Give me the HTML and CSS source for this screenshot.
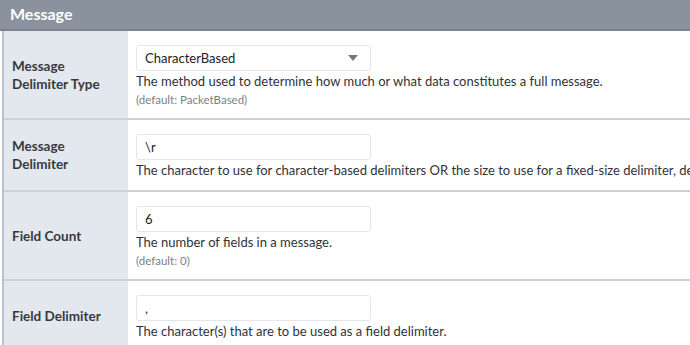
FILE: index.html
```html
<!DOCTYPE html>
<html lang="en">
<head>
    <meta charset="UTF-8" />
    <title>Message Settings</title>
    <link rel="stylesheet" href="styles.css">
</head>
<body>
    <div class="panel">
        <div class="panel-header">Message</div>
        <div class="props">
            <div class="prop-row">
                <div class="prop-label">Message Delimiter Type</div>
                <div class="prop-value">
                    <div class="field select">
                        <span>CharacterBased</span>
                        <span class="caret"></span>
                    </div>
                    <div class="desc">The method used to determine how much or what data constitutes a full message.</div>
                    <div class="default">(default: PacketBased)</div>
                </div>
            </div>
            <div class="prop-row short">
                <div class="prop-label">Message Delimiter</div>
                <div class="prop-value">
                    <div class="field">\r</div>
                    <div class="desc">The character to use for character-based delimiters OR the size to use for a fixed-size delimiter, de</div>
                </div>
            </div>
            <div class="prop-row">
                <div class="prop-label">Field Count</div>
                <div class="prop-value">
                    <div class="field">6</div>
                    <div class="desc">The number of fields in a message.</div>
                    <div class="default">(default: 0)</div>
                </div>
            </div>
            <div class="prop-row last">
                <div class="prop-label">Field Delimiter</div>
                <div class="prop-value">
                    <div class="field">,</div>
                    <div class="desc">The character(s) that are to be used as a field delimiter.</div>
                </div>
            </div>
        </div>
    </div>
</body>
</html>
```

FILE: styles.css
```css
html, body {
    margin: 0;
    overflow: hidden;
}
body {
    font-family: Lato, "Noto Sans", sans-serif;
    color: #2f3338;
    background: #fff;
    width: 690px;
    height: 345px;
}
.panel-header {
    background: #8a939d;
    color: #fff;
    font-weight: bold;
    font-size: 16px;
    line-height: 27px;
    padding-left: 10px;
    border-bottom: 2px solid #7b848e;
    box-sizing: border-box;
    height: 31px;
}
.props {
    margin-left: 2px;
    border-left: 2px solid #b9c1c9;
}
.prop-row {
    display: flex;
    border-bottom: 2px solid #cdd2d8;
    min-height: 87px;
}
.prop-row.short {
    min-height: 68px;
}
.prop-row.last {
    min-height: 70px;
    border-bottom: none;
}
.prop-label {
    width: 124px;
    flex-shrink: 0;
    background: #e3e8ee;
    box-sizing: border-box;
    padding: 0 8px 0 8px;
    display: flex;
    align-items: center;
    font-weight: bold;
    font-size: 13.5px;
    line-height: 18px;
    color: #363a3f;
}
.prop-value {
    padding: 14px 0 10px 8px;
    white-space: nowrap;
}
.field {
    width: 235px;
    height: 26px;
    box-sizing: border-box;
    border: 1px solid #e3e6ea;
    border-radius: 3px;
    padding: 0 8px;
    font-size: 13px;
    line-height: 24px;
    color: #222;
    display: flex;
    align-items: center;
    justify-content: space-between;
}
.caret {
    width: 0;
    height: 0;
    border-left: 5px solid transparent;
    border-right: 5px solid transparent;
    border-top: 6px solid #777;
    margin-right: 4px;
}
.desc {
    font-size: 13px;
    line-height: 20px;
}
.default {
    font-size: 11.5px;
    line-height: 17px;
    color: #7d8186;
}
```
